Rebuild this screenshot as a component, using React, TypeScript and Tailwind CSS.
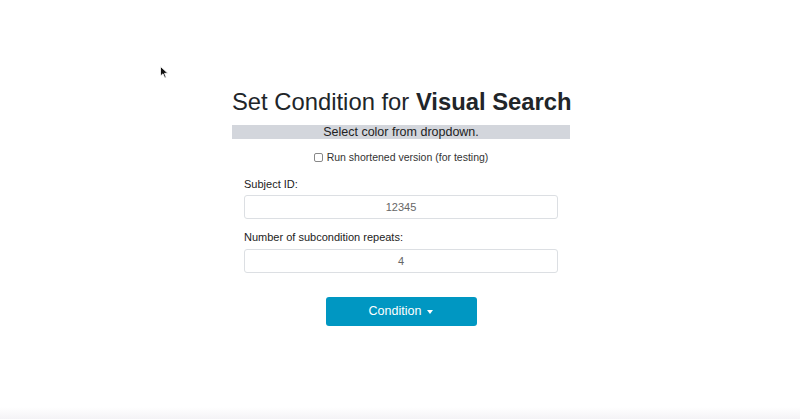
export default function App() {
  return (
    <div className="relative w-[800px] h-[419px] bg-white overflow-hidden font-['Liberation_Sans',Arial,sans-serif] text-[#212529]">
      {/* mouse pointer */}
      <svg className="absolute left-[160px] top-[66px]" width="9" height="13" viewBox="0 0 9 13">
        <path d="M0.5 0.5 L0.5 10 L3 7.8 L4.8 12 L6.2 11.4 L4.5 7.3 L7.8 7.3 Z" fill="#111" stroke="#fff" strokeWidth="0.8" />
      </svg>
      <div className="flex flex-col items-center pt-[88px] pl-[2px]">
        <div className="w-[338px] flex flex-col">
          <h1 className="text-[23.8px] leading-[28px] text-center whitespace-nowrap">
            Set Condition for <b>Visual Search</b>
          </h1>
          <div className="mt-[9px] h-[14px] bg-[#d3d6dc] text-[12.5px] leading-[14px] text-center text-[#222]">
            Select color from dropdown.
          </div>
          <label className="mt-[12px] flex items-center justify-center gap-[4px] text-[10.5px] leading-[13px] text-[#333]">
            <span className="w-[9px] h-[9px] border border-[#888] rounded-[2px] bg-white" />
            Run shortened version (for testing)
          </label>
          <div className="px-[12px] mt-[14px] flex flex-col">
            <div className="text-[11px] leading-[13px] text-[#222]">Subject ID:</div>
            <div className="mt-[4px] h-[24px] border border-[#dcdfe3] rounded-[3px] flex items-center justify-center text-[11px] text-[#666]">
              12345
            </div>
            <div className="mt-[12px] text-[11px] leading-[13px] text-[#222]">Number of subcondition repeats:</div>
            <div className="mt-[5px] h-[24px] border border-[#dcdfe3] rounded-[3px] flex items-center justify-center text-[11px] text-[#666]">
              4
            </div>
          </div>
          <div className="mt-[24px] flex justify-center">
            <button className="w-[151px] h-[29px] rounded-[3px] bg-[#0097c2] text-white text-[12.5px] flex items-center justify-center gap-[6px]">
              Condition
              <span className="w-0 h-0 border-l-[3.5px] border-r-[3.5px] border-t-[4px] border-l-transparent border-r-transparent border-t-white" />
            </button>
          </div>
        </div>
      </div>
      <div className="absolute left-0 right-0 bottom-0 h-[12px] bg-gradient-to-b from-white to-[#f4f3f6]" />
    </div>
  );
}
